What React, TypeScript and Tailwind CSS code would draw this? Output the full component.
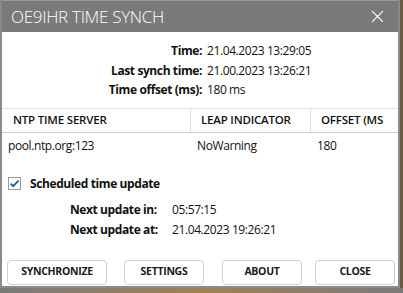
import React from "react";

const font = { fontFamily: '"Open Sans", "Noto Sans", sans-serif' };

function Btn({ label, w }: { label: string; w: string }) {
  return (
    <div
      className={`${w} h-[25px] flex items-center justify-center rounded-[4px] border border-[#d0d0d0] bg-white text-[10.5px] font-bold text-[#1a1a1a] tracking-[-0.3px]`}
    >
      {label}
    </div>
  );
}

export default function App() {
  return (
    <div className="w-[403px] h-[293px] bg-[#6b5a40] overflow-hidden relative" style={font}>
      <div className="w-[400px] h-[288px] bg-white border-l-2 border-r-2 border-b-2 border-[#8a8a8a] flex flex-col">
        {/* Title bar */}
        <div className="h-[32px] bg-[#7a7a7a] border-t border-[#9a9a9a] flex items-center justify-between pl-[9px] pr-[14px] shrink-0">
          <span className="text-[17px] text-white font-light tracking-[-0.3px]">OE9IHR TIME SYNCH</span>
          <svg width="13" height="13" viewBox="0 0 12 12">
            <path d="M1 1L11 11M11 1L1 11" stroke="#ffffff" strokeWidth="1.1" />
          </svg>
        </div>

        {/* Info rows */}
        <div className="grid grid-cols-[200px_1fr] gap-x-[5px] text-[12px] tracking-[-0.4px] text-[#111] leading-[19.5px] pt-[9px]">
          <div className="text-right font-bold">Time:</div>
          <div>21.04.2023 13:29:05</div>
          <div className="text-right font-bold">Last synch time:</div>
          <div>21.00.2023 13:26:21</div>
          <div className="text-right font-bold">Time offset (ms):</div>
          <div>180 ms</div>
        </div>

        {/* Table */}
        <div className="mt-[8px] border-t border-[#e4e4e4]">
          <div className="grid grid-cols-[189px_120px_1fr] h-[24px] border-b border-[#cfcfcf] text-[11.5px] font-semibold text-[#111] items-center tracking-[-0.2px]">
            <div className="pl-[11px] border-r border-[#dcdcdc] h-full flex items-center">NTP TIME SERVER</div>
            <div className="pl-[10px] border-r border-[#dcdcdc] h-full flex items-center">LEAP INDICATOR</div>
            <div className="pl-[10px] h-full flex items-center whitespace-nowrap overflow-hidden">OFFSET (MS</div>
          </div>
          <div className="grid grid-cols-[189px_120px_1fr] h-[26px] text-[12px] tracking-[-0.4px] text-[#111] items-center">
            <div className="pl-[6px]">pool.ntp.org:123</div>
            <div className="pl-[6px]">NoWarning</div>
            <div className="pl-[6px]">180</div>
          </div>
        </div>

        {/* Checkbox */}
        <div className="flex items-center gap-[9px] pl-[6px] mt-[16px]">
          <div className="w-[13px] h-[13px] border border-[#9a9a9a] bg-white flex items-center justify-center">
            <svg width="11" height="11" viewBox="0 0 12 12">
              <path d="M1.8 6.2L4.6 9L10.4 2.8" stroke="#1a5d9c" strokeWidth="2" fill="none" />
            </svg>
          </div>
          <span className="text-[12px] tracking-[-0.4px] font-bold text-[#111]">Scheduled time update</span>
        </div>

        {/* Next update */}
        <div className="grid grid-cols-[102px_1fr] pl-[68px] text-[12px] tracking-[-0.4px] text-[#111] leading-[20px] mt-[7px]">
          <div className="font-bold">Next update in:</div>
          <div>05:57:15</div>
          <div className="font-bold">Next update at:</div>
          <div>21.04.2023 19:26:21</div>
        </div>

        {/* Buttons */}
        <div className="flex items-center pl-[5px] mt-[20px]">
          <Btn label="SYNCHRONIZE" w="w-[100px]" />
          <div className="w-[17px]" />
          <Btn label="SETTINGS" w="w-[80px]" />
          <div className="w-[18px]" />
          <Btn label="ABOUT" w="w-[80px]" />
          <div className="w-[13px]" />
          <Btn label="CLOSE" w="w-[80px]" />
        </div>
      </div>
      <div className="absolute left-0 right-0 top-[288px] h-[5px] bg-gradient-to-r from-[#7a7a7a] via-[#a08050] to-[#7a7a7a]" />
    </div>
  );
}
